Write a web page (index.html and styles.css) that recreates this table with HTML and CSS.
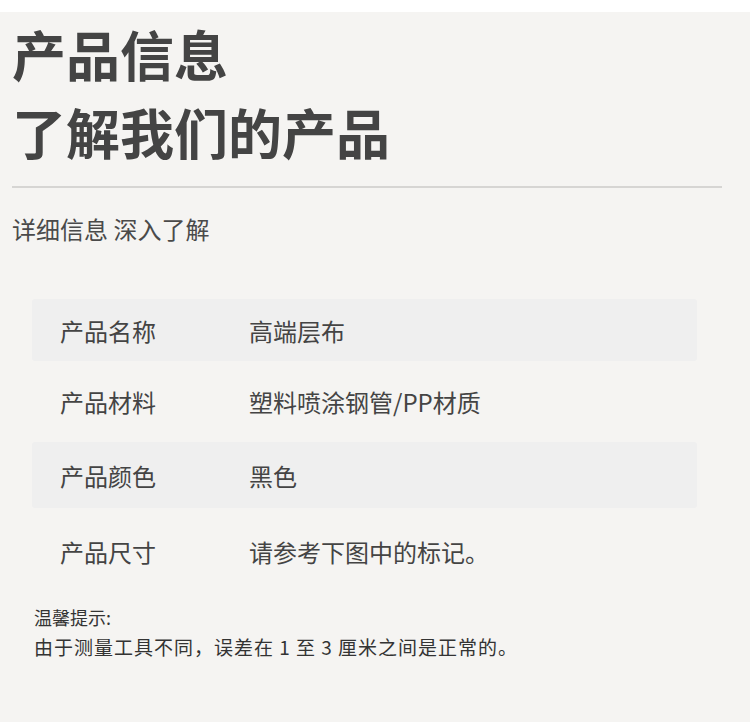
FILE: index.html
```html
<!DOCTYPE html>
<html lang="zh-CN">
<head>
<meta charset="utf-8">
<title>产品信息</title>
<link rel="stylesheet" href="styles.css">
</head>
<body>
<div class="page">
  <header class="hero">
    <h1 class="title">产品信息<br>了解我们的产品</h1>
  </header>
  <hr class="divider">
  <p class="subtitle">详细信息 深入了解</p>
  <div class="specs">
    <div class="row shaded r1"><span class="label">产品名称</span><span class="value">高端层布</span></div>
    <div class="row r2"><span class="label">产品材料</span><span class="value">塑料喷涂钢管/PP材质</span></div>
    <div class="row shaded r3"><span class="label">产品颜色</span><span class="value">黑色</span></div>
    <div class="row r4"><span class="label">产品尺寸</span><span class="value">请参考下图中的标记。</span></div>
  </div>
  <div class="note">
    <p class="note-title">温馨提示:</p>
    <p class="note-text">由于测量工具不同，误差在 1 至 3 厘米之间是正常的。</p>
  </div>
</div>
</body>
</html>
```

FILE: styles.css
```css
html, body {
  margin: 0;
  padding: 0;
  background: #ffffff;
}
body {
  font-family: "Noto Sans CJK SC", "Noto Sans", sans-serif;
  color: #444444;
}
.page {
  margin-top: 12px;
  background: #f5f4f2;
  min-height: 710px;
  padding: 3px 0 40px 0;
  box-sizing: border-box;
}
.hero {
  padding-left: 12px;
}
.title {
  margin: 0;
  font-size: 54px;
  line-height: 78px;
  font-weight: 700;
  color: #444444;
}
.divider {
  margin: 15px 28px 0 12px;
  border: none;
  height: 2px;
  background: #d6d5d3;
}
.subtitle {
  margin: 24px 0 0 12px;
  font-size: 24px;
  line-height: 34px;
  color: #4a4a4a;
}
.specs {
  margin: 53px 53px 0 32px;
  display: flex;
  flex-direction: column;
}
.row {
  display: flex;
  align-items: center;
  padding-left: 28px;
  font-size: 24px;
  color: #444444;
}
.row.shaded {
  background: #efefef;
  border-radius: 3px;
}
.r1 { height: 62px; }
.r2 { height: 81px; }
.r3 { height: 66px; }
.r4 { height: 86px; }
.label {
  width: 189px;
  flex: none;
}
.note {
  margin: 8px 0 0 34px;
  color: #333333;
}
.note p {
  margin: 0;
  line-height: 30px;
}
.note-title {
  font-size: 18px;
}
.note-text {
  font-size: 19px;
  letter-spacing: 1px;
  margin-left: -1px;
}
```
